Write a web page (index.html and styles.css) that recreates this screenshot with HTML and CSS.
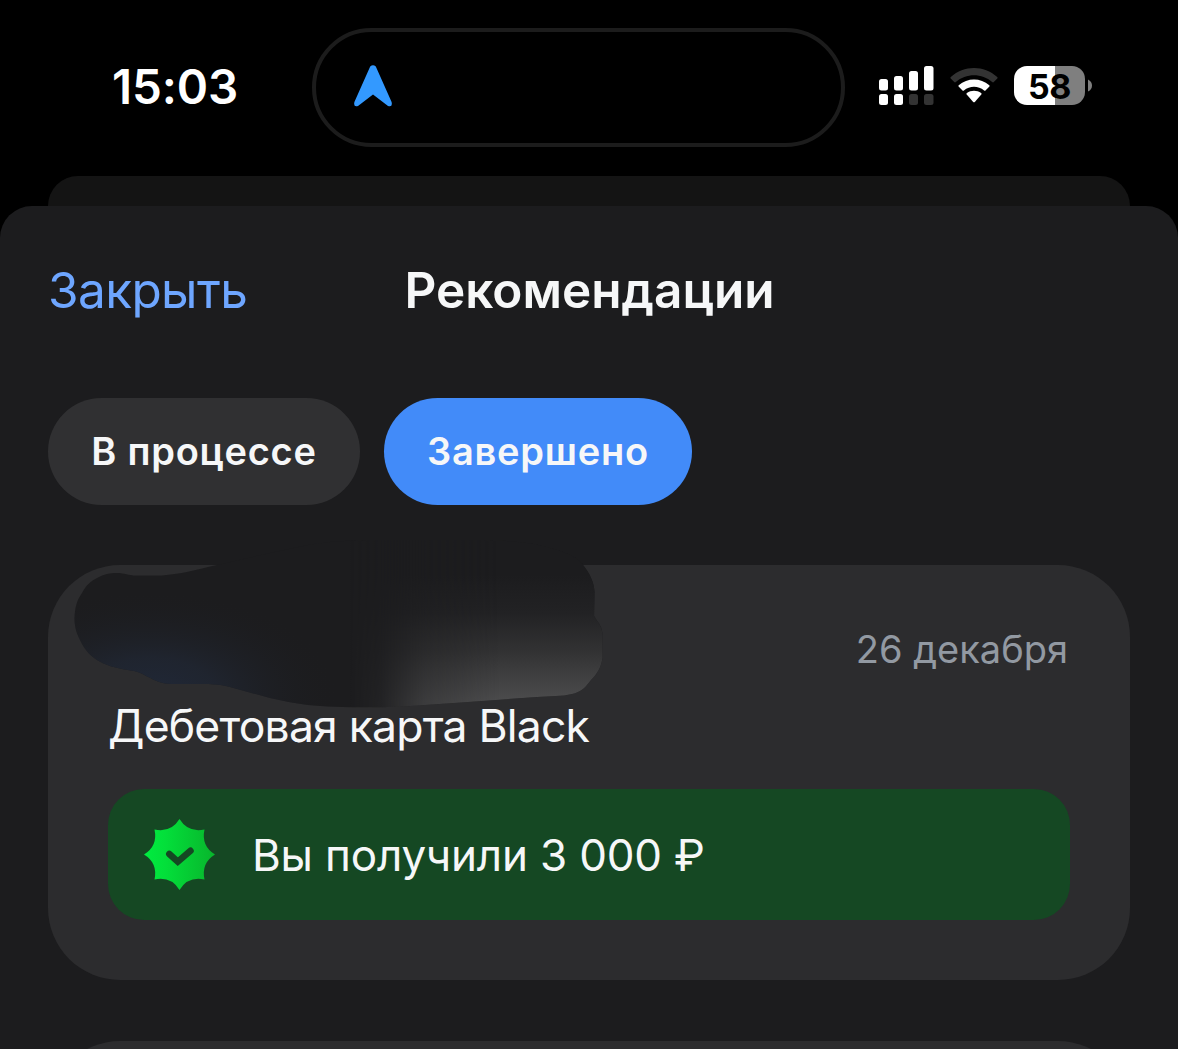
FILE: index.html
```html
<!DOCTYPE html>
<html lang="ru">
    <head>
        <meta charset="UTF-8" />
        <meta name="viewport" content="width=device-width, initial-scale=1.0" />
        <title>Рекомендации</title>
        <link rel="stylesheet" href="styles.css">
    </head>
    <body>
        <div class="statusbar">
            <div class="time">15:03</div>
            <div class="island">
                <svg width="38" height="42" viewBox="0 0 38 42">
                    <path d="M16.2 1.6Q19-1 21.8 1.6L37.6 37Q38.8 42.4 34 40.9L19 29.6L4 40.9Q-.8 42.4.4 37Z" fill="#3399ff" />
                </svg>
            </div>
            <div class="indicators">
                <svg class="signal" width="55" height="39" viewBox="0 0 55 39">
                    <g fill="#fff">
                        <rect x="0" y="13" width="9" height="11.5" rx="2.5" />
                        <rect x="15" y="10" width="9" height="14.5" rx="2.5" />
                        <rect x="30" y="5" width="9" height="19.5" rx="2.5" />
                        <rect x="45" y="0" width="9.5" height="24.5" rx="2.5" />
                        <rect x="0" y="28" width="9" height="11" rx="2.5" />
                        <rect x="15" y="28" width="9" height="11" rx="2.5" />
                    </g>
                    <g fill="#333">
                        <rect x="30" y="28" width="9" height="11" rx="2.5" />
                        <rect x="45" y="28" width="9.5" height="11" rx="2.5" />
                    </g>
                </svg>
                <svg class="wifi" width="48" height="36" viewBox="0 0 48 36">
                    <path d="M.7 10.6Q0 9.800.8 9C14-3 34-3 47.200 9Q48 9.800 47.300 10.600L43.800 14Q43 14.800 42.200 14C32 5 16 5 5.800 14Q5 14.800 4.200 14Z" fill="#333" />
                    <path d="M8.600 18.600Q8 17.900 8.700 17.200C17.500 9.500 30.500 9.500 39.300 17.200Q40 17.900 39.400 18.600L35.500 22.400Q34.800 23 34.100 22.400C28.300 17.500 19.700 17.500 13.900 22.400Q13.200 23 12.500 22.400Z" fill="#fff" />
                    <path d="M16.700 26.600Q16 25.800 16.900 25.100C21 22 27 22 31.100 25.100Q32 25.800 31.300 26.600L24.800 33.900Q24 34.700 23.200 33.900Z" fill="#fff" />
                </svg>
                <div class="battery">58</div>
                <svg class="battery-tip" width="5" height="13" viewBox="0 0 5 13">
                    <path d="M0 .5Q4 2.500 4 6.500T0 12.500Z" fill="#7f7f7f" />
                </svg>
            </div>
        </div>
        <div class="back-sheet"></div>
        <div class="sheet">
            <header class="header">
                <a class="close">Закрыть</a>
                <h1 class="title">Рекомендации</h1>
            </header>
            <nav class="tabs">
                <button class="tab">В процессе</button>
                <button class="tab active">Завершено</button>
            </nav>
            <article class="card">
                <svg class="smudge" width="532" height="170" viewBox="72 538 532 170">
                    <defs>
                        <radialGradient id="blue" gradientUnits="userSpaceOnUse" cx="0" cy="0" r="1" gradientTransform="translate(150 695) scale(190 105)">
                            <stop offset="0" stop-color="#202838" />
                            <stop offset=".35" stop-color="#202632" stop-opacity=".85" />
                            <stop offset="1" stop-color="#1c1c1e" stop-opacity="0" />
                        </radialGradient>
                        <linearGradient id="gray" gradientUnits="userSpaceOnUse" x1="0" y1="575" x2="0" y2="702">
                            <stop offset="0" stop-color="#1c1c1e" />
                            <stop offset=".3" stop-color="#222224" />
                            <stop offset=".6" stop-color="#323233" />
                            <stop offset=".85" stop-color="#434344" />
                            <stop offset="1" stop-color="#4c4c4d" />
                        </linearGradient>
                        <linearGradient id="fade" gradientUnits="userSpaceOnUse" x1="350" y1="0" x2="500" y2="0">
                            <stop offset="0" stop-color="#000" />
                            <stop offset=".2" stop-color="#222" />
                            <stop offset=".5" stop-color="#a8a8a8" />
                            <stop offset="1" stop-color="#fff" />
                        </linearGradient>
                        <mask id="fadeMask" maskUnits="userSpaceOnUse" x="72" y="538" width="532" height="170">
                            <rect x="72" y="538" width="532" height="170" fill="url(#fade)" />
                        </mask>
                        <path id="blob" d="M74.500 618C75 607 77 600 82 593C86 585 91 581 97 578C104 574 110 573 117 573C125 573 128 575.500 136 575.500L162 575.500C180 574 192 571 208 567L270 553L308 545C340 540 360 540 384 540L480 540C520 541 535 543 557 550C571 555 578 558 583 565C590 574 594 582 594.500 592L594 616C598 623 602 625 602.500 635L602.500 658C601 668 597 674 591 680C585 688 581 692 572 694C562 696.500 550 696 537 697L461 702.500L403 706.500C385 707.500 335 708 308 705C294 703 283 701 270 698L230 687C218 684 212 684 200 684L172 684C160 684 155 680 147 676.500C140 672 135 671 128 670C115 668 105 665 97 660C88 654 84 648 80 640C76 632 74.500 626 74.500 618Z" />
                    </defs>
                    <use href="#blob" fill="#1c1c1e" />
                    <use href="#blob" fill="url(#blue)" />
                    <use href="#blob" fill="url(#gray)" mask="url(#fadeMask)" />
                </svg>
                <div class="date">26 декабря</div>
                <h2 class="product">Дебетовая карта Black</h2>
                <div class="reward">
                    <svg width="72" height="72" viewBox="0 0 72 72">
                        <defs>
                            <linearGradient id="badge" x1="0" y1="0" x2="1" y2="0">
                                <stop offset="0" stop-color="#00ec40" />
                                <stop offset=".3" stop-color="#03df3a" />
                                <stop offset="1" stop-color="#08b52c" />
                            </linearGradient>
                        </defs>
                        <path d="M35.500 0Q44 14 60.500 10.500Q57 27 71 35.500Q57 44 60.500 60.500Q44 57 35.500 71Q27 57 10.500 60.500Q14 44 0 35.500Q14 27 10.500 10.500Q27 14 35.500 0Z" fill="url(#badge)" />
                        <path d="M25.300 35L33.800 42.700L46.500 31.800" fill="none" stroke="#154823" stroke-width="6.500" stroke-linecap="round" />
                    </svg>
                    <span>Вы получили 3 000 ₽</span>
                </div>
            </article>
            <article class="card"></article>
        </div>
    </body>
</html>
```
FILE: styles.css
```css
* {
    box-sizing: border-box;
    margin: 0;
    padding: 0;
}
body {
    height: 1049px;
    overflow: hidden;
    background-color: #000;
    color: #f6f7f8;
    font-family: Inter, "Liberation Sans", sans-serif;
}
svg {
    display: block;
    flex-shrink: 0;
}
.statusbar {
    display: flex;
    align-items: flex-start;
    height: 176px;
    padding: 28px 0 0 112px;
}
.time {
    width: 200px;
    color: #fff;
    font-size: 47.5px;
    font-weight: 600;
    letter-spacing: -.1px;
    line-height: 118px;
}
.island {
    display: flex;
    align-items: flex-start;
    width: 533px;
    height: 119px;
    padding: 33px 0 0 38px;
    border: 4px solid #1c1c1c;
    border-radius: 60px;
}
.indicators {
    display: flex;
    margin: 38px 0 0 34px;
}
.wifi {
    margin: 2px 0 0 16px;
}
.battery {
    width: 71px;
    height: 39px;
    margin-left: 16px;
    border-radius: 13px;
    background: linear-gradient(to right, #fff 41px, #7f7f7f 41px);
    color: #000;
    font-size: 34px;
    font-weight: 700;
    letter-spacing: -.4px;
    line-height: 41px;
    text-align: center;
}
.battery-tip {
    margin: 13px 0 0 3px;
}
.back-sheet {
    height: 30px;
    margin: 0 48px;
    border-radius: 30px 30px 0 0;
    background-color: #141414;
}
.sheet {
    height: 843px;
    padding: 0 48px;
    overflow: hidden;
    border-radius: 32px 32px 0 0;
    background-color: #1c1c1e;
}
.header {
    display: grid;
    grid-template-columns: 1fr auto 1fr;
    height: 192px;
    padding-top: 54px;
    font-size: 49.5px;
    line-height: 60px;
}
.close {
    color: #6ea6ff;
    letter-spacing: -.6px;
}
.title {
    padding-left: 1px;
    font-size: inherit;
    font-weight: 600;
}
.tabs {
    display: flex;
    gap: 24px;
    margin-bottom: 60px;
}
.tab {
    width: 312px;
    height: 107px;
    border: 0;
    border-radius: 54px;
    background-color: #303032;
    color: #f6f7f8;
    font-family: inherit;
    font-size: 38px;
    font-weight: 600;
    letter-spacing: .75px;
    line-height: 105px;
}
.tab.active {
    width: 308px;
    background-color: #428bf9;
}
.card {
    position: relative;
    height: 415px;
    margin-bottom: 61px;
    padding: 60px;
    border-radius: 72px;
    background-color: #2c2c2e;
}
/* стёртый логотип поверх карточки */
.smudge {
    position: absolute;
    top: -27px;
    left: 24px;
}
.date {
    padding-right: 2px;
    color: #9299a2;
    font-size: 38px;
    line-height: 48px;
    text-align: right;
}
.product {
    margin-top: 23px;
    font-size: 44.5px;
    font-weight: 400;
    letter-spacing: -.8px;
    line-height: 60px;
}
.reward {
    display: flex;
    align-items: center;
    gap: 36px;
    height: 131px;
    margin-top: 33px;
    padding-left: 36px;
    border-radius: 36px;
    background-color: #154823;
    font-size: 44px;
    letter-spacing: -.18px;
}
```
